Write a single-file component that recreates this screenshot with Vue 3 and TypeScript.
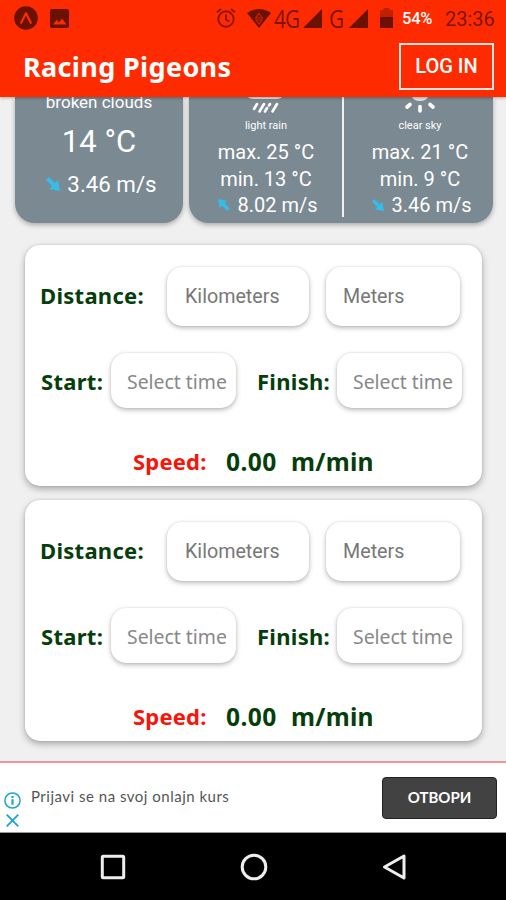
<script setup lang="ts">
interface Forecast {
  sky: string
  max: string
  min: string
  wind: string
  arrow: 'se' | 'nw'
}

const forecasts: Forecast[] = [
  { sky: 'light rain', max: 'max. 25 °C', min: 'min. 13 °C', wind: '8.02 m/s', arrow: 'nw' },
  { sky: 'clear sky', max: 'max. 21 °C', min: 'min. 9 °C', wind: '3.46 m/s', arrow: 'se' },
]

const calculators: { id: number; speed: string }[] = [
  { id: 1, speed: '0.00' },
  { id: 2, speed: '0.00' },
]
</script>

<template>
  <div class="screen">
    <header class="header">
      <div class="status">
        <svg class="ic-app" width="24" height="24" viewBox="0 0 24 24">
          <circle cx="12" cy="12" r="11.8" fill="#6b1100" />
          <path d="M7.2 16.8 12 7.2l4.8 9.6" fill="none" stroke="#ff2b00" stroke-width="2.2" stroke-linejoin="round" stroke-linecap="round" />
        </svg>
        <svg class="ic-photo" width="19" height="19" viewBox="0 0 19 19">
          <rect width="19" height="19" rx="2" fill="#6b1100" />
          <path d="M3 15.5 6.7 10.7 9 13.5 12.1 9.5 16.5 15.5Z" fill="#ff2b00" />
        </svg>
        <svg class="ic-alarm" width="20" height="20" viewBox="0 0 20 20" fill="none" stroke="#8b1500" stroke-width="1.9">
          <circle cx="10" cy="11" r="7.7" />
          <path d="M10 6.5v5l3.3 2M1 4.4 5 1M19 4.4 15 1" />
        </svg>
        <svg class="ic-wifi" width="24" height="19" viewBox="0 0 24 19">
          <path d="M0 4Q12-4 24 4L12 19Z" fill="#6b1100" />
          <path d="M12 4.500 15.500 9H8.500ZM9 11h6L12 15Z" fill="none" stroke="#d22300" stroke-width="1.1" />
        </svg>
        <span class="net net-4g">4G</span>
        <svg class="sig" width="19" height="19" viewBox="0 0 19 19"><path d="M19 0V19H0Z" fill="#6b1100" /></svg>
        <span class="net net-g">G</span>
        <svg class="sig" width="19" height="19" viewBox="0 0 19 19"><path d="M19 0V19H0Z" fill="#6b1100" /></svg>
        <svg class="ic-batt" width="13" height="20" viewBox="0 0 13 20">
          <path d="M0 2H3.5V0H9.5V2H13V9H0Z" fill="#c02000" />
          <path d="M0 9H13V20H0Z" fill="#6b1100" />
        </svg>
        <span class="pct">54%</span>
        <span class="clock">23:36</span>
      </div>
      <div class="appbar">
        <h1 class="title">Racing Pigeons</h1>
        <button class="login">LOG IN</button>
      </div>
    </header>

    <main class="content">
      <section class="weather">
        <div class="now">
          <div class="now-sky">broken clouds</div>
          <div class="now-temp">14 °C</div>
          <div class="now-wind">
            <svg class="arrow" width="14" height="14" viewBox="0 0 14 14"><path d="M0 3 3 0 9 6 12 3.5 14 14 3.5 12 6 9Z" fill="#35bdea" /></svg>
            <span>3.46 m/s</span>
          </div>
        </div>
        <div class="next">
          <div v-for="f in forecasts" :key="f.sky" class="day">
            <svg v-if="f.arrow === 'nw'" class="sky" width="44" height="18" viewBox="0 0 44 18">
              <path d="M4 0H38Q36 2 31 2H11Q6 2 4 0Z" fill="#e2e6e8" />
              <path d="M13 7l-3 5M20 7l-4.500 7.500M26 7l-1 1.500M23 11l-2 3.500M33 7l-4.500 7.500" stroke="#fff" stroke-width="2.600" stroke-linecap="round" />
            </svg>
            <svg v-else class="sky" width="44" height="18" viewBox="0 0 44 18">
              <path d="M14 0H30Q28 4 22 4T14 0Z" fill="#e2e6e8" />
              <path d="M12 7.500 9 10M22 9.500v4.500M32 7.500 35 10" stroke="#fff" stroke-width="3.600" stroke-linecap="round" />
            </svg>
            <div class="day-sky">{{ f.sky }}</div>
            <div class="day-line">{{ f.max }}</div>
            <div class="day-line">{{ f.min }}</div>
            <div class="day-line day-wind">
              <svg class="arrow" :class="f.arrow" width="12" height="12" viewBox="0 0 14 14"><path d="M0 3 3 0 9 6 12 3.500 14 14 3.500 12 6 9Z" fill="#35bdea" /></svg>
              <span>{{ f.wind }}</span>
            </div>
          </div>
        </div>
      </section>

      <section v-for="c in calculators" :key="c.id" class="card">
        <div class="row distance">
          <span class="label">Distance:</span>
          <div class="field km">Kilometers</div>
          <div class="field m">Meters</div>
        </div>
        <div class="row times">
          <span class="label start">Start:</span>
          <div class="field time">Select time</div>
          <span class="label finish">Finish:</span>
          <div class="field time">Select time</div>
        </div>
        <div class="row result">
          <span class="speed">Speed:</span>
          <span class="value">{{ c.speed }}</span>
          <span class="unit">m/min</span>
        </div>
      </section>
    </main>

    <aside class="ad">
      <div class="ad-marks">
        <svg width="17" height="17" viewBox="0 0 17 17">
          <circle cx="8.500" cy="8.500" r="7.600" fill="none" stroke="#20a5cc" stroke-width="1.500" />
          <path d="M8.500 7.300v5.500M8.500 4v2" stroke="#20a5cc" stroke-width="2.200" />
        </svg>
        <svg width="13" height="13" viewBox="0 0 13 13"><path d="M.7.7 12.300 12.300M12.300.7.7 12.300" stroke="#20a5cc" stroke-width="1.900" /></svg>
      </div>
      <span class="ad-text">Prijavi se na svoj onlajn kurs</span>
      <button class="ad-open">ОТВОРИ</button>
    </aside>

    <nav class="nav">
      <svg width="26" height="26" viewBox="0 0 26 26"><rect x="2.300" y="2.300" width="21.400" height="21.400" rx="1" fill="none" stroke="#eee" stroke-width="3" /></svg>
      <svg width="28" height="28" viewBox="0 0 28 28"><circle cx="14" cy="14" r="11.800" fill="none" stroke="#eee" stroke-width="3" /></svg>
      <svg width="26" height="28" viewBox="0 0 26 28"><path d="M23 3V25L3.500 14Z" fill="none" stroke="#eee" stroke-width="3" stroke-linejoin="round" /></svg>
    </nav>
  </div>
</template>

<style>
body {
  margin: 0;
  background: #f0f0f0;
}
</style>

<style scoped>
.screen {
  width: 506px;
  height: 900px;
  display: flex;
  flex-direction: column;
  overflow: hidden;
  background: #f0f0f0;
  font-family: Roboto, "Liberation Sans", sans-serif;
  white-space: nowrap;
}
.screen * {
  box-sizing: border-box;
}
svg {
  flex: none;
  display: block;
}
.header {
  height: 97px;
  flex: none;
  background: #ff2b00;
  box-shadow: 0 1px 3px rgba(0, 0, 0, 0.3);
  position: relative;
  z-index: 1;
}
.status {
  height: 36px;
  display: flex;
  align-items: center;
  padding-left: 14px;
  color: #7d1400;
}
.ic-photo {
  margin-left: 12px;
}
.ic-alarm {
  margin-left: 147px;
}
.ic-wifi {
  margin-left: 11px;
}
.net {
  font: 400 26px/36px "Open Sans", sans-serif;
  flex: none;
  transform: scaleX(0.8);
  transform-origin: left;
}
.net-4g {
  width: 29px;
  margin-left: 3px;
  letter-spacing: -1px;
}
.net-g {
  width: 16px;
  margin: 0 4px 0 7px;
}
.ic-batt {
  margin-left: 12px;
}
.pct {
  margin-left: 9px;
  width: 31px;
  font-size: 16.500px;
  letter-spacing: -0.200px;
  font-weight: 500;
  color: #fff;
}
.clock {
  margin-left: 12px;
  padding-top: 1px;
  font-size: 20px;
}
.appbar {
  height: 61px;
  display: flex;
  align-items: center;
  justify-content: space-between;
  padding: 0 12px 0 23px;
}
.title {
  margin: 0;
  font: 700 27px/36px "Noto Sans", sans-serif;
  letter-spacing: 0.350px;
  color: #fff;
}
.login {
  width: 95px;
  height: 47px;
  margin-top: -1px;
  padding: 0;
  border: 2px solid #ffe5e0;
  background: none;
  color: #fff;
  font: 500 20px/43px Roboto, sans-serif;
}
.content {
  flex: 1;
  min-height: 0;
}
.weather {
  height: 126px;
  display: flex;
  gap: 6px;
  padding: 0 13px 0 15px;
  color: #fff;
}
.now,
.next {
  height: 126px;
  flex: none;
  background: #7b8992;
  border-radius: 0 0 20px 20px;
  box-shadow: 0 2px 5px rgba(0, 0, 0, 0.3);
}
.now {
  width: 168px;
  display: flex;
  flex-direction: column;
  text-align: center;
}
.now-sky {
  margin-top: -5px;
  font-size: 17px;
  line-height: 20px;
}
.now-temp {
  margin-top: 11px;
  font-size: 31px;
  line-height: 38px;
}
.now-wind {
  margin-top: 10px;
  display: flex;
  align-items: center;
  justify-content: center;
  gap: 7px;
  padding-left: 5px;
  font-size: 22.300px;
  line-height: 26px;
}
.next {
  width: 304px;
  display: flex;
}
.day {
  width: 154px;
  flex: none;
  height: 120px;
  display: flex;
  flex-direction: column;
  align-items: center;
}
.day + .day {
  width: 151px;
  margin-left: -1px;
  padding-left: 3px;
  border-left: 2px solid #eef0f2;
}
.day-sky {
  margin-top: 4px;
  font-size: 11px;
  line-height: 14px;
  padding-bottom: 6px;
}
.day-line {
  font-size: 20px;
  line-height: 26.500px;
}
.day-wind {
  display: flex;
  align-items: center;
  gap: 7px;
  padding-left: 4px;
}
.nw {
  transform: rotate(180deg);
}
.card {
  width: 457px;
  height: 241px;
  margin: 22px 0 0 25px;
  padding-top: 22px;
  background: #fff;
  border-radius: 15px;
  box-shadow: 0 3px 7px rgba(0, 0, 0, 0.3), 0 0 2px rgba(0, 0, 0, 0.15);
}
.card + .card {
  margin-top: 14px;
}
.row {
  display: flex;
  align-items: center;
}
.label,
.speed,
.value,
.unit {
  font-family: "Noto Sans", sans-serif;
  font-weight: 700;
  color: #063e0b;
  flex: none;
}
.label {
  font-size: 22px;
  line-height: 30px;
  letter-spacing: 0.280px;
}
.field {
  flex: none;
  background: #fff;
  border-radius: 15px;
  box-shadow: 0 2px 5px rgba(0, 0, 0, 0.27), 0 0 2px rgba(0, 0, 0, 0.12);
  color: #777;
}
.distance {
  height: 59px;
  padding-left: 15px;
}
.distance .label {
  width: 127px;
  padding-bottom: 3px;
}
.distance .field {
  height: 59px;
  font-size: 19.700px;
  line-height: 59px;
  padding-left: 18px;
}
.km {
  width: 142px;
}
.distance .m {
  width: 134px;
  margin-left: 17px;
  padding-left: 17px;
}
.times {
  height: 55px;
  margin-top: 27px;
  padding-left: 16px;
}
.start {
  width: 70px;
}
.finish {
  width: 80px;
  margin-left: 21px;
}
.time {
  width: 125px;
  height: 55px;
  padding-left: 16px;
  font: 400 19.400px/57px "Noto Sans", sans-serif;
  color: #888;
}
.result {
  height: 34px;
  margin-top: 36px;
  padding-left: 108px;
}
.speed {
  width: 93px;
  font-size: 22px;
  letter-spacing: 0.200px;
  color: #f71409;
}
.value {
  width: 65px;
  font-size: 24.600px;
  letter-spacing: 0.400px;
}
.unit {
  font-size: 24.600px;
  letter-spacing: 0.250px;
}
.ad {
  height: 72px;
  flex: none;
  display: flex;
  align-items: center;
  border-top: 2px solid #f49393;
  border-bottom: 1px solid #999;
  background: #fff;
  padding: 0 9px 0 4px;
}
.ad-marks {
  width: 27px;
  display: flex;
  flex-direction: column;
  gap: 5px;
  padding-top: 24px;
}
.ad-marks svg:last-child {
  margin-left: 2px;
}
.ad-text {
  flex: 1;
  padding-bottom: 3px;
  font: 400 15px/20px Lato, sans-serif;
  letter-spacing: 0.500px;
  color: #555;
}
.ad-open {
  width: 115px;
  height: 42px;
  padding: 0 0 2px;
  border: 1px solid #222;
  border-radius: 4px;
  background: #424242;
  color: #fff;
  font: 700 15px/36px Lato, "Open Sans", sans-serif;
}
.nav {
  height: 67px;
  flex: none;
  display: flex;
  align-items: center;
  background: #000;
  padding: 0 0 0 100px;
  gap: 114px;
}
.nav svg:last-child {
  margin-left: -1px;
}
</style>
